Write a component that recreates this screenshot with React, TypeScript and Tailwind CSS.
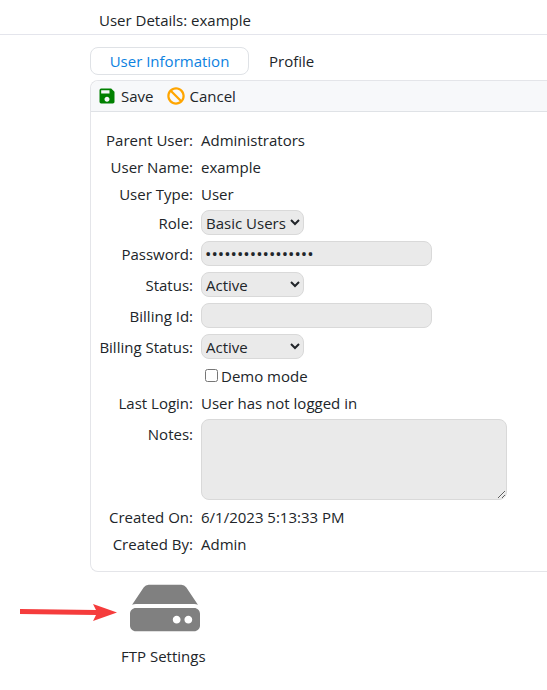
import React, { useState } from 'react';
import { FaBan, FaHdd } from 'react-icons/fa';
import { MdSave } from 'react-icons/md';

const field = 'rounded-lg border border-[#d9d9d9] bg-[#eaeaea] outline-none';

function Row({ label, htmlFor, tall, top, children }: {
  label?: string;
  htmlFor?: string;
  tall?: boolean;
  top?: boolean;
  children: React.ReactNode;
}) {
  const Label = htmlFor ? 'label' : 'span';
  return (
    <div className={`flex gap-2 ${top ? 'items-start' : 'items-center'} ${tall ? 'min-h-[31px]' : 'min-h-[27px]'}`}>
      {label ? (
        <Label htmlFor={htmlFor} className={`w-24 shrink-0 whitespace-nowrap text-right ${top ? 'pt-2' : ''}`}>{label}</Label>
      ) : (
        <span className="w-24 shrink-0" />
      )}
      <div className="flex min-w-0 items-center">{children}</div>
    </div>
  );
}

function Select({ id, options }: { id: string; options: string[] }) {
  return (
    <span className="relative flex">
      <select id={id} className={`${field} h-[25px] w-[103px] appearance-none pl-1`}>
        {options.map((o) => <option key={o}>{o}</option>)}
      </select>
      <svg viewBox="0 0 10 7" className="pointer-events-none absolute right-1 top-[9px] h-[7px] w-[10px]" fill="none" stroke="#212529" strokeWidth="2">
        <path d="M1 1l4 4 4-4" />
      </svg>
    </span>
  );
}

export default function App() {
  const [password, setPassword] = useState('examplepassword12');
  return (
    <div className="bg-white pb-5 font-['Open_Sans','Noto_Sans',sans-serif] text-[15px] leading-5 text-[#212529]">
      <header className="border-b border-[#e4e5ec] pb-1 pl-[99px] pt-[10px]">
        <h1>User Details: example</h1>
      </header>
      <main className="pl-[90px] pt-3">
        <nav className="flex h-7 items-stretch">
          <button className="w-[159px] rounded-lg border border-[#dfe2e6] text-[#0d82df]">User Information</button>
          <button className="px-5">Profile</button>
        </nav>
        <section className="mt-[5px] rounded-bl-lg rounded-tl-lg border border-r-0 border-[#e4e5e9]">
          <div className="flex h-[31px] items-center gap-[14px] rounded-tl-lg border-b border-[#dfe2e6] bg-[#f7f8fa] pl-[6px]">
            <button className="flex items-center gap-1">
              <MdSave className="size-5 text-[#008000]" />Save
            </button>
            <button className="flex items-center gap-1">
              <FaBan className="size-[18px] text-[#ffa500]" />Cancel
            </button>
          </div>
          <div className="pb-[14px] pl-[6px] pt-[14px]">
            <Row label="Parent User:">Administrators</Row>
            <Row label="User Name:">example</Row>
            <Row label="User Type:">User</Row>
            <Row label="Role:" htmlFor="role" tall><Select id="role" options={['Basic Users']} /></Row>
            <Row label="Password:" htmlFor="password" tall>
              <input id="password" type="password" value={password} onChange={(e) => setPassword(e.target.value)} className={`${field} h-[25px] w-[231px] px-[3px] text-[17px]`} />
            </Row>
            <Row label="Status:" htmlFor="status" tall><Select id="status" options={['Active', 'Inactive']} /></Row>
            <Row label="Billing Id:" htmlFor="billing" tall>
              <input id="billing" type="text" className={`${field} h-[25px] w-[231px] px-[3px]`} />
            </Row>
            <Row label="Billing Status:" htmlFor="billing-status" tall><Select id="billing-status" options={['Active', 'Inactive']} /></Row>
            <Row>
              <input id="demo" type="checkbox" className="ml-1 mr-[3px] size-[13px]" />
              <label htmlFor="demo">Demo mode</label>
            </Row>
            <Row label="Last Login:">User has not logged in</Row>
            <Row label="Notes:" htmlFor="notes" top>
              <textarea id="notes" className={`${field} my-[3px] h-[81px] w-[306px]`} />
            </Row>
            <Row label="Created On:">6/1/2023 5:13:33 PM</Row>
            <Row label="Created By:">Admin</Row>
          </div>
        </section>
      </main>
      <div className="flex items-start pl-5 pt-1">
        <svg viewBox="0 0 97 18" className="mt-7 h-[18px] w-[97px]" fill="#f53c3c">
          <path d="M0 5L76 6L73 0L97 8.5L73 17L76 11L0 10Z" />
        </svg>
        <a href="#ftp" className="ml-1 flex flex-col items-center gap-[6px]">
          <FaHdd className="ml-1 h-16 w-[70px] text-[#808080]" />
          <span>FTP Settings</span>
        </a>
      </div>
    </div>
  );
}
